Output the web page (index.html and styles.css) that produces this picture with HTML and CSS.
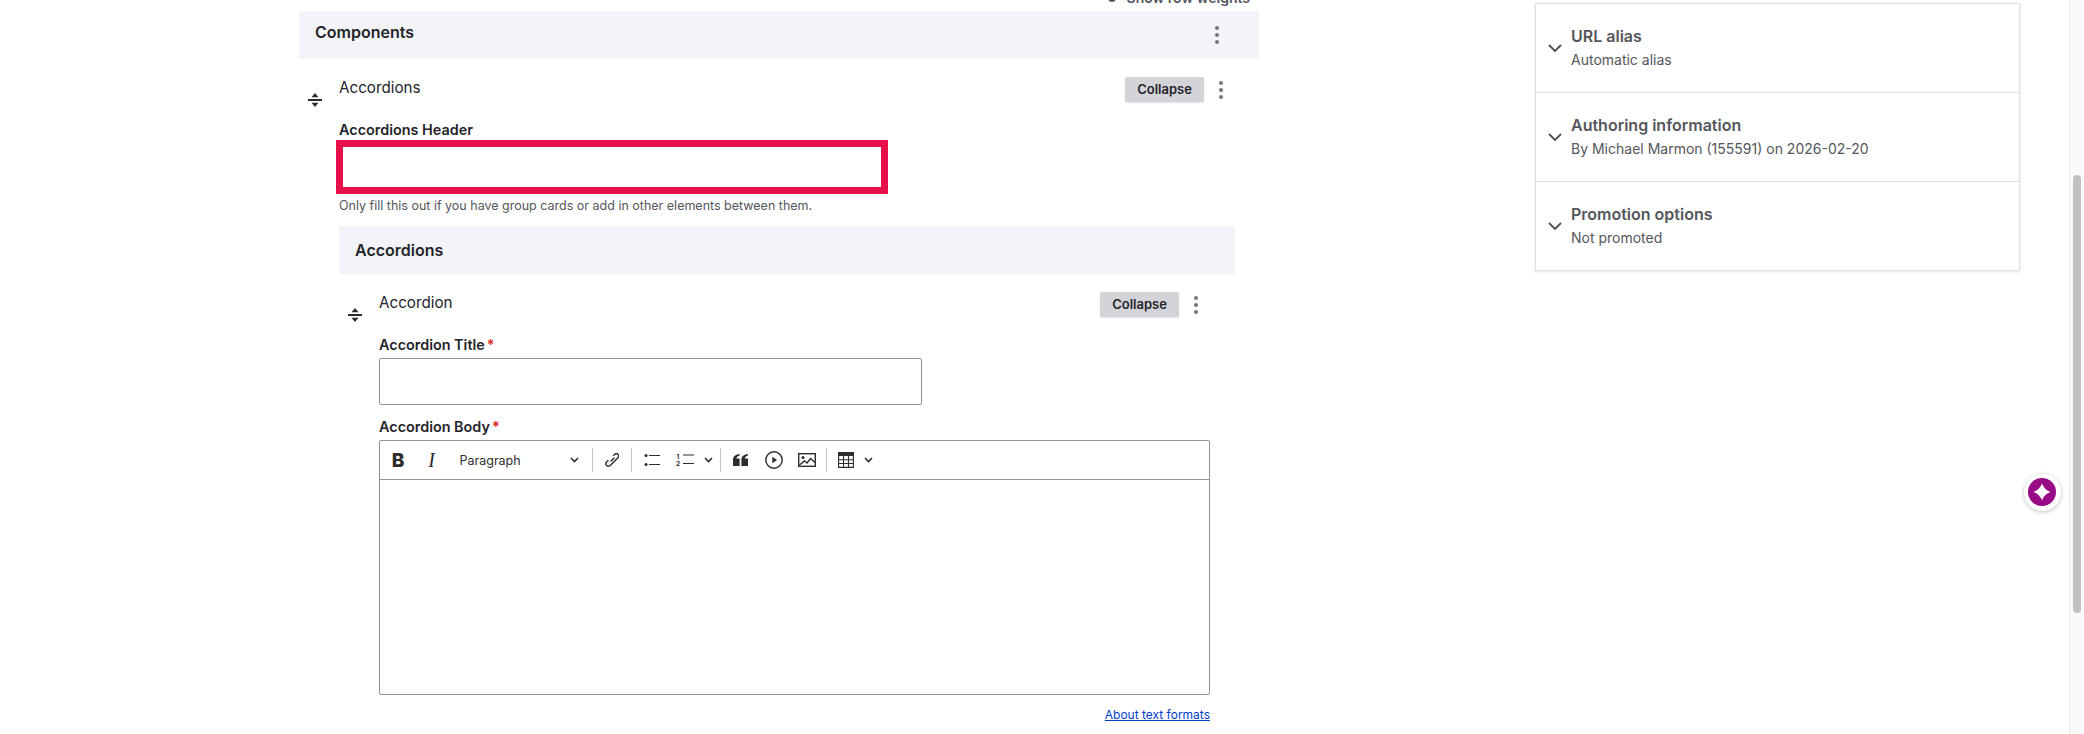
FILE: index.html
```html
<!DOCTYPE html>
<html lang="en">
<head>
<meta charset="utf-8">
<title>Edit content</title>
<link rel="stylesheet" href="styles.css">
</head>
<body>
<div class="page">
  <main class="main">
    <div class="weights"><span class="weights-dot"></span><a class="weights-link">Show row weights</a></div>

    <div class="bar">
      <h3 class="bar-title">Components</h3>
      <span class="dots"><i></i><i></i><i></i></span>
    </div>

    <div class="item">
      <svg class="handle" viewBox="0 0 14 14"><path d="M7 0 10.500 4.200H3.500Z M0 6.100H14V7.900H0Z M3.500 9.800H10.500L7 14Z"/></svg>
      <div class="item-body">
        <div class="item-head">
          <span class="item-name">Accordions</span>
          <div class="item-actions">
            <button class="collapse">Collapse</button>
            <span class="dots"><i></i><i></i><i></i></span>
          </div>
        </div>
        <label class="label label-first">Accordions Header</label>
        <input class="input input-error" type="text">
        <div class="help">Only fill this out if you have group cards or add in other elements between them.</div>

        <div class="bar bar-nested">
          <h3 class="bar-title">Accordions</h3>
        </div>

        <div class="item">
          <svg class="handle" viewBox="0 0 14 14"><path d="M7 0 10.500 4.200H3.500Z M0 6.100H14V7.900H0Z M3.500 9.800H10.500L7 14Z"/></svg>
          <div class="item-body item-body-nested">
            <div class="item-head">
              <span class="item-name">Accordion</span>
              <div class="item-actions">
                <button class="collapse">Collapse</button>
                <span class="dots"><i></i><i></i><i></i></span>
              </div>
            </div>
            <label class="label label-first">Accordion Title<span class="req">*</span></label>
            <input class="input input-title" type="text">
            <label class="label label-body">Accordion Body<span class="req">*</span></label>
            <div class="editor">
              <div class="toolbar">
                <span class="tool tool-b">B</span>
                <span class="tool tool-i">I</span>
                <span class="format"><span>Paragraph</span>
                  <svg class="chev" viewBox="0 0 9 6"><path d="M1 1 4.500 4.500 8 1"/></svg>
                </span>
                <span class="sep"></span>
                <span class="tool tool-link">
                  <svg class="ico-link" viewBox="0 0 14 14"><path d="M8.200 2.700 9.600 1.400A2.400 2.400 0 0 1 13 4.800L5.200 12.400A2.400 2.400 0 0 1 1.600 9L3.400 7.200M5.600 8.600 9.400 4.800"/></svg>
                </span>
                <span class="sep"></span>
                <svg class="ico ico-bul" viewBox="0 0 16 12"><circle cx="2" cy="1.500" r="1.500"/><circle cx="2" cy="10.500" r="1.500"/><path d="M5 .9H16V2.100H5ZM5 9.900H16V11.100H5Z"/></svg>
                <svg class="ico ico-num" viewBox="0 0 18 14"><text x="0.500" y="5.500" class="num">1</text><text x="0" y="13" class="num">2</text><path d="M7 1.400H18V2.600H7ZM7 9.900H18V11.100H7Z"/></svg>
                <svg class="chev chev-list" viewBox="0 0 9 6"><path d="M1 1 4.500 4.500 8 1"/></svg>
                <span class="sep sep-list"></span>
                <svg class="ico ico-quote" viewBox="0 0 15 12"><path d="M6.600 0 6.600 1.500C4.600 2 3.600 3.200 3.400 4.600H6.600V12H0V5.600C0 2.600 2.500.4 6.600 0ZM15 0V1.500C13 2 12 3.200 11.800 4.600H15V12H8.400V5.600C8.400 2.600 10.900.4 15 0Z"/></svg>
                <svg class="ico ico-play" viewBox="0 0 18 18"><circle class="ln" cx="9" cy="9" r="8.200"/><path d="M7.300 5.800 12 9 7.300 12.200Z"/></svg>
                <svg class="ico ico-img" viewBox="0 0 18 14"><rect class="ln" x=".7" y=".7" width="16.600" height="12.600"/><circle cx="5" cy="4.500" r="1.500"/><path class="ln" d="M1.500 12 6.500 8 9 10 12.500 5.500 17 9.500"/></svg>
                <span class="sep sep-img"></span>
                <svg class="ico ico-table" viewBox="0 0 16 16"><path d="M0 0H16V4H0Z"/><path class="ln-thin" d="M.6.6H15.400V15.400H.6ZM.6 7.700H15.400M.6 11.500H15.400M5.500 4V15.400M10.500 4V15.400"/></svg>
                <svg class="chev chev-table" viewBox="0 0 9 6"><path d="M1 1 4.500 4.500 8 1"/></svg>
              </div>
              <div class="editable"></div>
            </div>
            <div class="formats"><a class="formats-link" href="#">About text formats</a></div>
          </div>
        </div>
      </div>
    </div>
  </main>

  <aside class="side">
    <div class="side-row">
      <svg class="side-chev" viewBox="0 0 14 8"><path d="M1 1 7 7 13 1"/></svg>
      <div><div class="side-title">URL alias</div><div class="side-sum">Automatic alias</div></div>
    </div>
    <div class="side-row">
      <svg class="side-chev" viewBox="0 0 14 8"><path d="M1 1 7 7 13 1"/></svg>
      <div><div class="side-title">Authoring information</div><div class="side-sum">By Michael Marmon (155591) on 2026-02-20</div></div>
    </div>
    <div class="side-row">
      <svg class="side-chev" viewBox="0 0 14 8"><path d="M1 1 7 7 13 1"/></svg>
      <div><div class="side-title">Promotion options</div><div class="side-sum">Not promoted</div></div>
    </div>
  </aside>
</div>

<div class="fab"><span class="fab-in"><svg viewBox="0 0 16 16"><path d="M8 .5Q10 6 15.500 8 10 10 8 15.500 6 10 .5 8 6 6 8 .5Z"/></svg></span></div>
<div class="scrollbar"><span class="thumb"></span></div>
</body>
</html>
```
FILE: styles.css
```css
* { box-sizing: border-box; }
html, body { margin: 0; height: 100%; overflow: hidden; background: #fff; }
body { font-family: Inter, "Liberation Sans", sans-serif; color: #232429; }

.page { display: flex; padding-left: 299px; align-items: flex-start; }
.main { width: 960px; flex: none; }

.weights { margin-top: -9px; height: 20px; display: flex; justify-content: flex-end; align-items: flex-start; padding-right: 9px; font-size: 14px; line-height: 14px; font-weight: 600; color: #55565b; gap: 11px; }
.weights-dot { width: 8px; height: 8px; margin-top: 3px; border-radius: 50%; background: #55565b; }

.bar { height: 48px; background: #f3f4f9; padding: 0 40px 0 16px; display: flex; align-items: center; justify-content: space-between; }
.bar-title { margin: 0; font-size: 16px; line-height: 20px; font-weight: 600; position: relative; top: -3px; }
.bar-nested { margin-top: 11px; }
.bar-nested .bar-title { top: 0; }

.dots { display: flex; flex-direction: column; gap: 3px; width: 4px; flex: none; }
.dots i { display: block; width: 4px; height: 4px; border-radius: 50%; background: #75767b; }

.item { display: flex; align-items: flex-start; }
.handle { width: 14px; height: 14px; margin: 34px 17px 0 9px; flex: none; fill: #2a2b30; }
.item-body { width: 896px; flex: none; }
.item-body-nested { width: 831px; }

.item-head { display: flex; justify-content: space-between; align-items: flex-start; padding: 18px 12px 0 0; }
.item-name { font-size: 15.200px; line-height: 21px; }
.item-actions { display: flex; align-items: center; gap: 15px; }
.collapse { width: 79px; height: 25px; padding: 0; border: 0; border-radius: 2px; background: #d3d4d9; box-shadow: 0 1px 2px rgba(0,0,0,.12); color: #232429; font: 600 13px/25px Inter, "Liberation Sans", sans-serif; }

.label { display: block; font-size: 14.400px; line-height: 18px; font-weight: 600; }
.label-first { margin-top: 19px; }
.label-body { margin-top: 13px; }
.req { color: #dc2323; margin-left: 2px; }

.input { display: block; background: #fff; border-radius: 2px; }
.input-error { width: 552px; height: 54px; margin: 1px 0 0 -3px; border: 7px solid #e8104a; border-radius: 0; }
.input-title { width: 543px; height: 47px; margin: 4px 0 0 0; border: 1px solid #8e929c; }
.help { margin-top: 3px; font-size: 12.500px; line-height: 18px; color: #55565b; }

.editor { margin: 4px 0 0 0; width: 831px; height: 255px; border: 1px solid #8e929c; border-radius: 2px; }
.toolbar { height: 39px; display: flex; align-items: center; border-bottom: 1px solid #8e929c; color: #2d2d2d; }
.tool { display: flex; align-items: center; justify-content: center; flex: none; }
.tool-b { width: 36px; font-size: 19px; font-weight: 800; }
.tool-i { width: 31px; font: italic 400 20px "Liberation Serif", serif; }
.tool-link { width: 38px; }
.format { width: 145px; padding: 0 13px 0 12.500px; display: flex; justify-content: space-between; align-items: center; font-size: 12.500px; }
.sep { width: 1px; height: 24px; background: #c4c5c5; flex: none; }
.chev { width: 9px; height: 6px; flex: none; fill: none; stroke: #2d2d2d; stroke-width: 1.600; }
.ico { flex: none; fill: #2d2d2d; }
.ln { fill: none; stroke: #2d2d2d; stroke-width: 1.400; }
.ln-thin { fill: none; stroke: #2d2d2d; stroke-width: 1.100; }
.num { font: 700 6.500px Inter, sans-serif; fill: #2d2d2d; }
.ico-link { width: 14px; height: 14px; fill: none; stroke: #2d2d2d; stroke-width: 1.400; }
.ico-bul { width: 16px; height: 12px; margin-left: 12px; }
.ico-num { width: 18px; height: 14px; margin-left: 16px; }
.chev-list { margin-left: 10px; }
.sep-list { margin-left: 7px; }
.ico-quote { width: 15px; height: 12px; margin-left: 12px; }
.ico-play { width: 18px; height: 18px; margin-left: 17px; }
.ico-img { width: 18px; height: 14px; margin-left: 15px; }
.sep-img { margin-left: 10px; }
.ico-table { width: 16px; height: 16px; margin-left: 11px; }
.chev-table { margin-left: 10px; }
.editable { height: 214px; }

.formats { margin-top: 11px; text-align: right; font-size: 12px; line-height: 18px; }
.formats-link { color: #003ecc; }

.side { width: 485px; flex: none; margin: 3px 0 0 276px; background: #fff; border: 1px solid #dedfe4; border-width: 0 1px 1px; box-shadow: 0 1px 3px rgba(34,35,48,.12); }
.side-row { height: 89px; display: flex; align-items: center; padding: 0 0 2px 12px; border-top: 1px solid #dedfe4; gap: 9px; }
.side-chev { width: 14px; height: 8px; flex: none; fill: none; stroke: #4e4f55; stroke-width: 1.800; margin-top: 2px; }
.side-title { font-size: 16px; line-height: 20px; font-weight: 600; color: #55565b; }
.side-sum { margin-top: 5px; font-size: 14px; line-height: 18px; color: #55565b; }

.fab { position: fixed; left: 2023.500px; top: 473.500px; width: 37px; height: 37px; border-radius: 50%; background: #fff; box-shadow: 0 1px 4px rgba(0,0,0,.25); display: flex; align-items: center; justify-content: center; }
.fab-in { width: 28px; height: 28px; border-radius: 50%; background: #990a87; display: flex; align-items: center; justify-content: center; }
.fab-in svg { width: 18px; height: 18px; fill: #fff; }

.scrollbar { position: fixed; top: 0; right: 1px; bottom: 0; width: 14px; background: #fafafa; border-left: 1px solid #e8e8e8; }
.thumb { position: absolute; left: 3px; top: 175px; width: 8px; height: 438px; border-radius: 4px; background: #c1c1c1; }
```
